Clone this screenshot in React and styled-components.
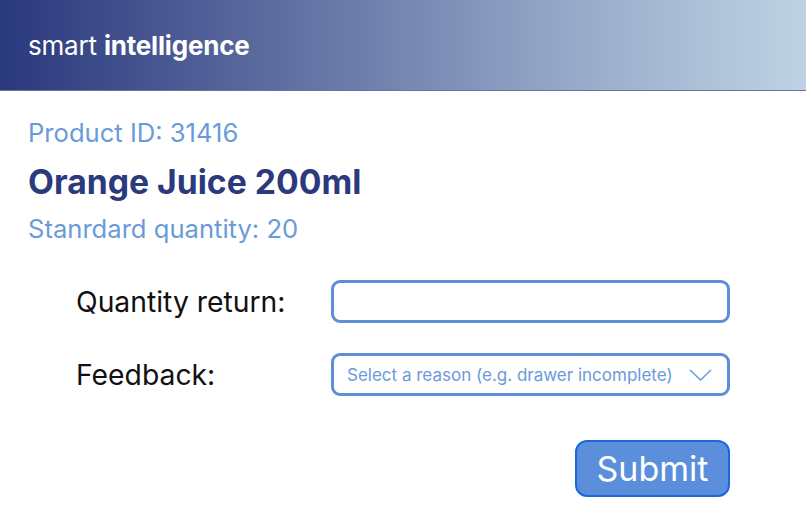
import React from "react";
import styled, { createGlobalStyle } from "styled-components";

const GlobalStyle = createGlobalStyle`
  body {
    margin: 0;
    background: #ffffff;
    font-family: Inter, "Noto Sans", sans-serif;
  }
`;

const Header = styled.header`
  height: 90px;
  display: flex;
  align-items: center;
  padding-left: 28px;
  background: linear-gradient(90deg, #2a387d 0%, #6676a6 40%, #95a8c8 70%, #bfd3e4 100%);
  border-bottom: 1px solid #6a73a0;
`;

const Brand = styled.div`
  color: #ffffff;
  font-size: 26px;
  letter-spacing: -0.2px;
  b {
    font-weight: 700;
  }
`;

const Main = styled.main`
  padding: 27px 28px 0 28px;
`;

const Meta = styled.div`
  color: #6a9bd8;
  font-size: 25.6px;
  line-height: 30px;
`;

const Title = styled.h1`
  margin: 15px 0 13px;
  color: #2b3a7c;
  font-size: 33.7px;
  font-weight: 700;
  line-height: 38px;
`;

const Form = styled.form`
  margin: 36px 0 0 48px;
  display: grid;
  grid-template-columns: 255px 399px;
  row-gap: 30px;
  align-items: center;
`;

const Label = styled.label`
  color: #111111;
  font-size: 28.3px;
  line-height: 34px;
`;

const Field = styled.div`
  height: 43px;
  box-sizing: border-box;
  border: 3px solid #5d8fd8;
  border-radius: 9px;
  display: flex;
  align-items: center;
  justify-content: space-between;
  padding: 0 15px 0 13px;
  color: #6a9bd8;
  font-size: 17px;
`;

const Actions = styled.div`
  grid-column: 2;
  display: flex;
  justify-content: flex-end;
  margin-top: 14px;
`;

const SubmitButton = styled.button`
  width: 155px;
  height: 57px;
  border-radius: 12px;
  border: 2.5px solid #1f66dc;
  background: #5b8fdc;
  color: #ffffff;
  font-family: Inter, "Noto Sans", sans-serif;
  font-size: 34px;
  padding: 0;
`;

export default function App() {
  return (
    <>
      <GlobalStyle />
      <Header>
        <Brand>
          smart <b>intelligence</b>
        </Brand>
      </Header>
      <Main>
        <Meta>Product ID: 31416</Meta>
        <Title>Orange Juice 200ml</Title>
        <Meta>Stanrdard quantity: 20</Meta>
        <Form onSubmit={(e) => e.preventDefault()}>
          <Label>Quantity return:</Label>
          <Field />
          <Label>Feedback:</Label>
          <Field>
            <span>Select a reason (e.g. drawer incomplete)</span>
            <svg width="23" height="12" viewBox="0 0 23 12" fill="none">
              <path d="M1 1l10.5 10L22 1" stroke="#6a9bd8" strokeWidth="1.5" />
            </svg>
          </Field>
          <Actions>
            <SubmitButton type="submit">Submit</SubmitButton>
          </Actions>
        </Form>
      </Main>
    </>
  );
}
